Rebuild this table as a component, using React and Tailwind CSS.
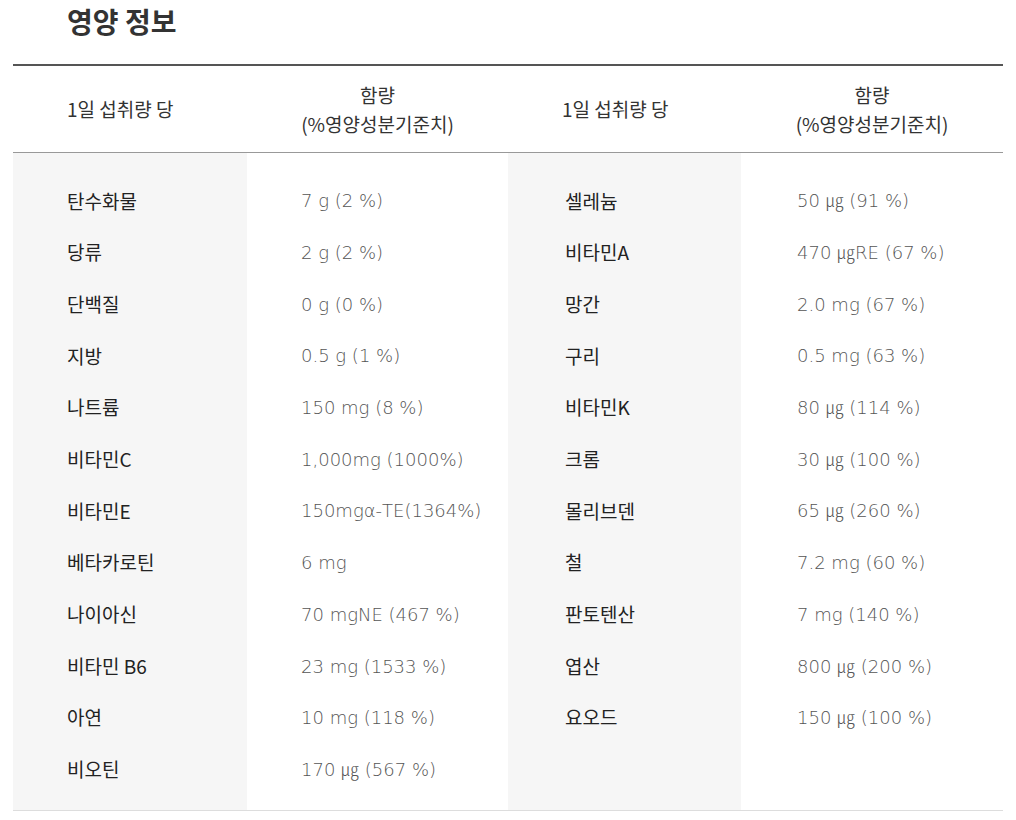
import React from 'react';

const leftRows = [
    ['탄수화물', '7 g (2 %)'],
    ['당류', '2 g (2 %)'],
    ['단백질', '0 g (0 %)'],
    ['지방', '0.5 g (1 %)'],
    ['나트륨', '150 mg (8 %)'],
    ['비타민C', '1,000mg (1000%)'],
    ['비타민E', '150mgα-TE(1364%)'],
    ['베타카로틴', '6 mg'],
    ['나이아신', '70 mgNE (467 %)'],
    ['비타민 B6', '23 mg (1533 %)'],
    ['아연', '10 mg (118 %)'],
    ['비오틴', '170 ㎍ (567 %)'],
];

const rightRows = [
    ['셀레늄', '50 ㎍ (91 %)'],
    ['비타민A', '470 ㎍RE (67 %)'],
    ['망간', '2.0 mg (67 %)'],
    ['구리', '0.5 mg (63 %)'],
    ['비타민K', '80 ㎍ (114 %)'],
    ['크롬', '30 ㎍ (100 %)'],
    ['몰리브덴', '65 ㎍ (260 %)'],
    ['철', '7.2 mg (60 %)'],
    ['판토텐산', '7 mg (140 %)'],
    ['엽산', '800 ㎍ (200 %)'],
    ['요오드', '150 ㎍ (100 %)'],
];

const font = { fontFamily: '"Noto Sans CJK KR", "Noto Sans", sans-serif' };
const valueFont = { fontFamily: '"DejaVu Sans", "Noto Sans CJK KR", sans-serif' };

const HeaderPair = () => (
    <>
        <div className="flex items-center pl-[54px] text-[19px] text-[#333]">1일 섭취량 당</div>
        <div className="flex flex-col items-center justify-center text-[19px] leading-[29px] text-[#333]">
            <span>함량</span>
            <span>(%영양성분기준치)</span>
        </div>
    </>
);

const Column = ({ items, gray, pl }) => (
    <div className={`${gray ? 'bg-[#f6f6f6]' : 'bg-white'} pt-[22px] pb-[15px] ${pl}`}>
        {items.map((text, i) => (
            <div
                key={i}
                style={gray ? undefined : valueFont}
                className={`h-[51.7px] flex items-center whitespace-nowrap ${gray ? 'text-[19px] text-[#222]' : 'text-[18px] text-[#555] font-extralight'}`}
            >
                {text}
            </div>
        ))}
    </div>
);

const App = () => {
    return (
        <div className="min-h-screen bg-white" style={font}>
            <div className="w-[990px] ml-[13px]">
                <h2 className="h-[64px] pl-[54px] pt-[1px] text-[28px] font-bold text-[#333] leading-[40px]">영양 정보</h2>
                <div className="border-t-2 border-[#555] border-b border-b-[#999]">
                    <div className="grid grid-cols-[234px_261px_233px_262px] h-[86px]">
                        <HeaderPair />
                        <HeaderPair />
                    </div>
                </div>
                <div className="grid grid-cols-[234px_261px_233px_262px] border-b border-[#ddd]">
                    <Column items={leftRows.map(r => r[0])} gray pl="pl-[54px]" />
                    <Column items={leftRows.map(r => r[1])} pl="pl-[54px]" />
                    <Column items={rightRows.map(r => r[0])} gray pl="pl-[57px]" />
                    <Column items={rightRows.map(r => r[1])} pl="pl-[56px]" />
                </div>
            </div>
        </div>
    );
};

export default App;
